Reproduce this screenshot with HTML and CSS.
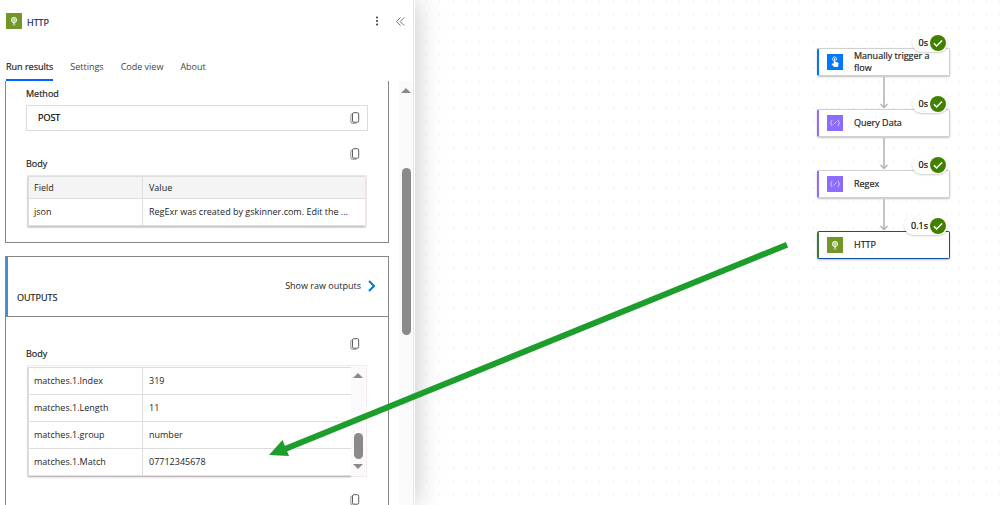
FILE: index.html
```
<!DOCTYPE html>
<html lang="en">
<head>
    <meta charset="UTF-8">
    <meta name="viewport" content="width=device-width, initial-scale=1.0">
    <title>Flow run - HTTP</title>
    <link rel="stylesheet" href="styles.css">
</head>
<body>

<!-- Shared icons -->
<svg class="hidden" aria-hidden="true">
    <symbol id="icon-http" viewBox="0 0 16 16">
        <circle cx="8" cy="7" r="2.7" fill="#d3e0b4" fill-opacity=".3" stroke="#eef4df" stroke-width=".9"/>
        <path d="M5.6 6.2h4.8M5.7 8h4.6M8 4.3v5.6M7 10.5h2M6.5 11.8h3" fill="none" stroke="#eef4df" stroke-width=".7"/>
    </symbol>
    <symbol id="icon-touch" viewBox="0 0 16 16">
        <path d="M5.7 6.4a2.2 2.2 0 1 1 3.6 0" fill="none" stroke="#fff" stroke-width=".8"/>
        <path d="M6.7 5.1c0-1 1.6-1 1.6 0v2.7l2.6.6c.6.2.8.6.7 1.2l-.5 2.8c-.1.5-.4.7-.9.7H7.8c-.4 0-.7-.1-1-.4L4.4 10.1c.4-.7 1.2-.7 2.3-.1z" fill="#fff"/>
    </symbol>
    <symbol id="icon-data" viewBox="0 0 16 16">
        <path d="M5.4 5.2c-1 0-1.1.4-1.1 1.2 0 .9-.1 1.3-1 1.6.9.3 1 .7 1 1.6 0 .8.1 1.2 1.1 1.2M10.6 5.2c1 0 1.1.4 1.1 1.2 0 .9.1 1.3 1 1.6-.9.3-1 .7-1 1.6 0 .8-.1 1.2-1.1 1.2M6.5 9.5l3-3" fill="none" stroke="#e6deff" stroke-width=".8"/>
    </symbol>
    <symbol id="icon-copy" viewBox="0 0 10 12">
        <path d="M2 2.2C1 2.4.8 3 .8 4v5c0 1.7.8 2.4 2.4 2.4h3.3" fill="none" stroke="#aaa" stroke-width="1.2"/>
        <rect x="2.5" y=".7" width="6.2" height="9.5" rx="1.4" fill="#fff" stroke="#5c5c5c"/>
    </symbol>
    <symbol id="icon-check" viewBox="0 0 16 16">
        <circle cx="8" cy="8" r="8" fill="#428000"/>
        <path d="M3.9 8.3l2.7 2.7 5.5-5.5" fill="none" stroke="#fff" stroke-width="1.5"/>
    </symbol>
    <symbol id="icon-down" viewBox="0 0 8 33">
        <path d="M4 1v30" stroke="#c4c4c4" stroke-width="2"/>
        <path d="M.5 28L4 31.5 7.5 28" fill="none" stroke="#b0b0b0" stroke-width="1.3"/>
    </symbol>
</svg>

<div class="app">
    <!-- Details panel -->
    <aside class="panel">
        <header class="panel-header">
            <svg class="op-icon green"><use href="#icon-http"/></svg>
            <h1>HTTP</h1>
            <button class="icon-btn" aria-label="More">
                <svg width="4" height="10" viewBox="0 0 4 10" fill="#333"><circle cx="2" cy="1.5" r="1"/><circle cx="2" cy="5" r="1"/><circle cx="2" cy="8.5" r="1"/></svg>
            </button>
            <button class="icon-btn" aria-label="Collapse">
                <svg width="9" height="9" viewBox="0 0 9 9" fill="none" stroke="#777"><path d="M4.5.5l-4 4 4 4M8.2.5l-4 4 4 4"/></svg>
            </button>
        </header>

        <nav class="tabs">
            <button class="tab active">Run results</button>
            <button class="tab">Settings</button>
            <button class="tab">Code view</button>
            <button class="tab">About</button>
        </nav>

        <div class="panel-body">
            <div class="cards">
                <!-- Inputs -->
                <section class="card inputs">
                    <div class="field-head first"><span class="field-label">Method</span></div>
                    <div class="value-box">
                        <span>POST</span>
                        <button class="icon-btn" aria-label="Copy method"><svg class="copy"><use href="#icon-copy"/></svg></button>
                    </div>
                    <div class="field-head">
                        <span class="field-label">Body</span>
                        <button class="icon-btn" aria-label="Copy body"><svg class="copy"><use href="#icon-copy"/></svg></button>
                    </div>
                    <div class="table-wrap">
                        <table>
                            <thead>
                                <tr><th>Field</th><th>Value</th></tr>
                            </thead>
                            <tbody>
                                <tr><td>json</td><td>RegExr was created by gskinner.com. Edit the ...</td></tr>
                            </tbody>
                        </table>
                    </div>
                </section>

                <!-- Outputs -->
                <section class="card outputs">
                    <div class="card-title">
                        <h2>OUTPUTS</h2>
                        <button class="raw-btn">Show raw outputs
                            <svg width="8" height="12" viewBox="0 0 8 12" fill="none" stroke="#0078d4" stroke-width="2"><path d="M1 1l5 5-5 5"/></svg>
                        </button>
                    </div>
                    <div class="card-content">
                        <div class="field-head">
                            <span class="field-label">Body</span>
                            <button class="icon-btn" aria-label="Copy output body"><svg class="copy"><use href="#icon-copy"/></svg></button>
                        </div>
                        <div class="table-wrap scrolled">
                            <table>
                                <tbody>
                                    <tr><td>matches.1.Index</td><td>319</td></tr>
                                    <tr><td>matches.1.Length</td><td>11</td></tr>
                                    <tr><td>matches.1.group</td><td>number</td></tr>
                                    <tr><td>matches.1.Match</td><td>07712345678</td></tr>
                                </tbody>
                            </table>
                            <div class="scrollbar">
                                <span class="arrow-up"></span>
                                <span class="thumb small"></span>
                                <span class="arrow-down"></span>
                            </div>
                        </div>
                        <div class="field-head last">
                            <button class="icon-btn" aria-label="Copy"><svg class="copy"><use href="#icon-copy"/></svg></button>
                        </div>
                    </div>
                </section>
            </div>
            <div class="scrollbar">
                <span class="arrow-up"></span>
                <span class="thumb"></span>
            </div>
        </div>
    </aside>

    <!-- Designer canvas -->
    <main class="canvas">
        <svg class="dots" aria-hidden="true">
            <defs>
                <pattern id="dots" width="40" height="40" patternUnits="userSpaceOnUse">
                    <path d="M11 1.5h1M24 1.5h1M38 1.5h1M11 14.5h1M24 14.5h1M38 14.5h1M11 28.5h1M24 28.5h1M38 28.5h1" stroke="#e0e0e0" stroke-width="1"/>
                </pattern>
            </defs>
            <rect width="100%" height="100%" fill="url(#dots)"/>
        </svg>

        <div class="flow">
            <div class="node blue-edge">
                <svg class="op-icon blue"><use href="#icon-touch"/></svg>
                <span class="node-name">Manually trigger a flow</span>
                <span class="badge">0s <svg><use href="#icon-check"/></svg></span>
            </div>
            <svg class="link"><use href="#icon-down"/></svg>
            <div class="node purple-edge">
                <svg class="op-icon purple"><use href="#icon-data"/></svg>
                <span class="node-name">Query Data</span>
                <span class="badge">0s <svg><use href="#icon-check"/></svg></span>
            </div>
            <svg class="link"><use href="#icon-down"/></svg>
            <div class="node purple-edge">
                <svg class="op-icon purple"><use href="#icon-data"/></svg>
                <span class="node-name">Regex</span>
                <span class="badge">0s <svg><use href="#icon-check"/></svg></span>
            </div>
            <svg class="link"><use href="#icon-down"/></svg>
            <div class="node green-edge selected">
                <svg class="op-icon green"><use href="#icon-http"/></svg>
                <span class="node-name">HTTP</span>
                <span class="badge">0.1s <svg><use href="#icon-check"/></svg></span>
            </div>
        </div>
    </main>
</div>

<!-- Arrow from the HTTP node to its matched number -->
<svg class="pointer" width="520" height="216" viewBox="0 0 520 216" aria-hidden="true">
    <path d="M518 4.7L16 209" stroke="#1c9d2c" stroke-width="6"/>
    <path d="M0 215l13.5-15 6.500 16z" fill="#1c9d2c"/>
</svg>

</body>
</html>
```

FILE: styles.css
```
* {
    box-sizing: border-box;
}

body {
    font-family: 'Open Sans', 'Noto Sans', sans-serif;
    font-size: 9px;
    line-height: 12px;
    margin: 0;
    color: #242424;
    background-color: #fff;
    overflow: hidden;
}

h1, h2 {
    margin: 0;
    font-size: 9px;
    font-weight: normal;
}

button {
    font: inherit;
    color: inherit;
    background: none;
    border: none;
    padding: 0;
    cursor: pointer;
}

svg {
    display: block;
    flex-shrink: 0;
}

.hidden {
    display: none;
}

.app {
    display: flex;
    height: 100vh;
}

/* Details panel */
.panel {
    display: flex;
    flex-direction: column;
    flex: 0 0 415px;
    background: #fff;
    box-shadow: 0 0 26px rgba(0, 0, 0, 0.24);
    border-right: 1px solid #fff;
    z-index: 1;
}

.panel-header {
    display: flex;
    align-items: center;
    gap: 5px;
    padding: 13px 8px 0 6px;
    border-right: 1px solid #e4e4e4;
}

.panel-header h1 {
    flex: 1;
    padding-top: 4px;
    font-size: 9px;
    color: #1b1b5a;
    -webkit-text-stroke: 0.2px #1b1b5a;
}

.icon-btn {
    display: flex;
}

.panel-header .icon-btn {
    margin-left: 12px;
}

.op-icon {
    width: 16px;
    height: 16px;
}

.green {
    background: #709727;
}

.blue {
    background: #0077ff;
}

.purple {
    background: #8c6cff;
}

.tabs {
    display: flex;
    gap: 17px;
    padding: 32px 6px 0;
    border-right: 1px solid #e4e4e4;
}

.tab {
    padding-bottom: 6px;
    border-bottom: 2px solid transparent;
    color: #424242;
}

.tab.active {
    color: #242424;
    border-color: #0062ff;
    -webkit-text-stroke: 0.2px #242424;
}

.panel-body {
    display: flex;
    flex: 1;
    min-height: 0;
    border-right: 1px solid #e4e4e4;
}

.cards {
    flex: 1;
    padding: 0 10px 0 5px;
    overflow: hidden;
}

.card {
    border: 1px solid #8a8686;
}

.inputs {
    border-top: none;
    padding: 0 20px 14px;
    margin-bottom: 13px;
}

.field-head {
    display: flex;
    align-items: flex-end;
    justify-content: space-between;
    height: 39px;
    margin-bottom: 5px;
    padding-right: 8px;
}

.field-head.first {
    height: 19px;
}

.field-head .icon-btn {
    align-self: flex-start;
    margin-top: 17px;
}

.field-head.last {
    justify-content: flex-end;
}

.field-label {
    -webkit-text-stroke: 0.2px #242424;
}

.value-box {
    display: flex;
    align-items: center;
    justify-content: space-between;
    height: 26px;
    padding: 0 7px 0 11px;
    border: 1px solid #dcdcdc;
    color: #000;
}

.value-box span {
    -webkit-text-stroke: 0.2px #000;
}

.copy {
    width: 10px;
    height: 12px;
}

.table-wrap {
    display: flex;
    margin: 0 1px;
    padding: 0 1px 1px 0;
    border: 1px solid #f4eaec;
}

table {
    flex: 1;
    border-collapse: collapse;
    table-layout: fixed;
    box-shadow: 0 1px 2px rgba(0, 0, 0, 0.3);
}

th, td {
    height: 27px;
    padding: 0 5px;
    border: 1px solid #dedede;
    text-align: left;
    font-weight: normal;
    white-space: nowrap;
}

th {
    height: 22px;
    background: #f4f4f4;
}

th:first-child, td:first-child {
    width: 114px;
}

th:last-child, td:last-child {
    padding-left: 6px;
    border-right: none;
}

.outputs {
    border-bottom: none;
}

.card-title {
    display: flex;
    align-items: flex-end;
    justify-content: space-between;
    height: 60px;
    padding: 0 12px 12px 9px;
    border-left: 2px solid #4a8ccb;
    border-bottom: 1px solid #8a8686;
}

.card-title h2 {
    -webkit-text-stroke: 0.2px #242424;
}

.raw-btn {
    display: flex;
    align-items: center;
    gap: 7px;
    margin-bottom: 12px;
}

.card-content {
    padding: 4px 20px 0;
}

.scrolled {
    padding: 1px 1px 0 0;
}

/* Scrollbars */
.scrollbar {
    display: flex;
    flex-direction: column;
    align-items: center;
    width: 14px;
    padding-top: 7px;
    background: #fafafa;
}

.arrow-up, .arrow-down {
    border: 5px solid transparent;
    border-top: none;
    border-bottom-color: #8a8a8a;
}

.arrow-down {
    transform: rotate(180deg);
}

.thumb {
    width: 9px;
    height: 167px;
    margin-top: 75px;
    border-radius: 5px;
    background: #8a8a8a;
}

.scrolled .scrollbar {
    padding: 6px 0 7px;
}

.thumb.small {
    height: 26px;
    margin: auto 0 5px;
}

/* Designer canvas */
.canvas {
    flex: 1;
    position: relative;
    padding: 48px 57px 0 0;
}

.dots {
    position: absolute;
    top: 0;
    left: 0;
    width: 100%;
    height: 100%;
}

.flow {
    display: flex;
    flex-direction: column;
    align-items: center;
    width: 133px;
    margin-left: auto;
}

.node {
    position: relative;
    display: flex;
    align-items: center;
    gap: 11px;
    width: 100%;
    height: 28px;
    padding: 0 8px;
    background: #fff;
    border: 1px solid #d0d0d0;
    border-left-width: 2px;
    border-radius: 2px;
    box-shadow: 0 1px 2px rgba(0, 0, 0, 0.25);
}

.node.selected {
    border-color: #0f4fa0;
}

.node.blue-edge {
    border-left-color: #0077ff;
}

.node.purple-edge {
    border-left-color: #8c6cff;
}

.node.green-edge {
    border-left-color: #3f7a3c;
}

.node-name {
    -webkit-text-stroke: 0.2px #242424;
}

.badge {
    position: absolute;
    top: -16px;
    right: 1px;
    display: flex;
    align-items: center;
    gap: 2px;
    height: 19px;
    padding: 0 2px 0 7px;
    border-radius: 10px;
    background: #fff;
    box-shadow: 0 1px 2px rgba(0, 0, 0, 0.2);
    color: #000;
    -webkit-text-stroke: 0.2px #000;
}

.badge svg {
    width: 16px;
    height: 16px;
}

.link {
    position: relative;
    width: 8px;
    height: 33px;
}

.pointer {
    position: absolute;
    top: 240px;
    left: 269px;
    z-index: 2;
}
```
